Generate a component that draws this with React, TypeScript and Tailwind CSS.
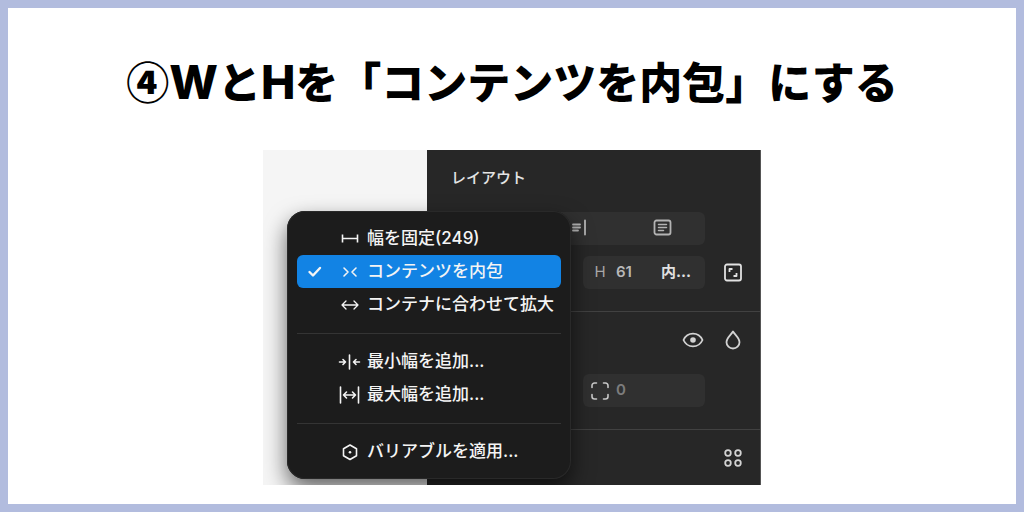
import { useState } from 'react'
import type { ReactNode } from 'react'

const iconProps = {
  fill: 'none',
  stroke: 'currentColor',
  strokeWidth: 1.6,
  strokeLinecap: 'round' as const,
  strokeLinejoin: 'round' as const,
  'aria-hidden': true,
}

const MenuIcon = ({ children }: { children: ReactNode }) => (
  <svg {...iconProps} viewBox="0 0 24 24" className="ml-[15px] mr-[5px] h-6 w-6 shrink-0">
    {children}
  </svg>
)

const PanelIcon = ({ children }: { children: ReactNode }) => (
  <svg {...iconProps} viewBox="0 0 24 24" strokeWidth={1.8} className="h-6 w-6">
    {children}
  </svg>
)

const menuGroups = [
  [
    {
      id: 'fixed',
      label: '幅を固定(249)',
      icon: <path d="M4.500 7.500v8M19.500 7.500v8M4.500 11.500h15" strokeLinecap="butt" />,
    },
    {
      id: 'hug',
      label: 'コンテンツを内包',
      icon: <path d="M6 8l4 4-4 4M18 8l-4 4 4 4" />,
    },
    {
      id: 'fill',
      label: 'コンテナに合わせて拡大',
      icon: <path d="M4 12h16M8 8l-4 4 4 4M16 8l4 4-4 4" strokeWidth="1.3" />,
    },
  ],
  [
    {
      id: 'min',
      label: '最小幅を追加...',
      icon: <path d="M11.500 5v14M1.500 12H7.500M5 9.500L7.500 12 5 14.500M21.500 12h-6M18 9.500L15.500 12l2.500 2.500" />,
    },
    {
      id: 'max',
      label: '最大幅を追加...',
      icon: <path d="M2.500 4v16M20.500 4v16M5.500 12h12M8.500 9l-3 3 3 3M14.500 9l3 3-3 3" />,
    },
  ],
  [
    {
      id: 'variable',
      label: 'バリアブルを適用...',
      icon: (
        <>
          <path d="M12 5l6.500 3.700v7L12 19.500l-6.500-3.800v-7z" />
          <circle cx="12" cy="12.200" r="1.300" fill="currentColor" stroke="none" />
        </>
      ),
    },
  ],
]

const WidthMenu = () => {
  const [selected, setSelected] = useState('hug')

  return (
    <div
      role="menu"
      className="absolute left-6 top-[61px] w-[284px] rounded-[18px] bg-[#1c1c1c] px-[10px] py-[11px] shadow-[0_10px_22px_rgba(0,0,0,0.6),inset_0_0_0_1px_#292929]"
    >
      {menuGroups.map((group, index) => (
        <div key={index} role="group">
          {index > 0 && <hr className="mb-[11px] mt-3 h-px border-0 bg-[#343434]" />}
          {group.map((item) => (
            <button
              key={item.id}
              type="button"
              role="menuitemradio"
              aria-checked={item.id === selected}
              onClick={() => setSelected(item.id)}
              className={`flex h-[33px] w-full items-center whitespace-nowrap rounded-md pl-[10px] text-left text-[17px] font-medium text-[#f4f4f4] ${
                item.id === selected ? 'bg-[#1283e4]' : ''
              }`}
            >
              <span className="h-4 w-4 shrink-0">
                {item.id === selected && (
                  <svg {...iconProps} viewBox="0 0 16 16" strokeWidth={2.4} className="h-4 w-4">
                    <path d="M2.500 8l3.500 3.500 7-7.500" />
                  </svg>
                )}
              </span>
              <MenuIcon>{item.icon}</MenuIcon>
              {item.label}
            </button>
          ))}
        </div>
      ))}
    </div>
  )
}

const LayoutPanel = () => (
  <aside className="flex-1 border-r border-[#555] bg-[#272727] text-[#d6d6d6]">
    <section className="border-b border-[#414141] pb-[22px] pl-6 pr-[15px] pt-4">
      <h2 className="mb-[22px] h-6 text-[15px] font-medium leading-6 text-[#e4e4e4]">レイアウト</h2>
      <div className="mr-10 flex h-[33px] rounded-md bg-[#303030] text-[#b4b4b4]">
        <span className="flex-1" />
        <button type="button" aria-label="右揃え" className="flex flex-1 items-center justify-center">
          <PanelIcon>
            <path d="M7 7.500h7M7 10.500h7M7 13.500h5M19 3.500v14" />
          </PanelIcon>
        </button>
        <button type="button" aria-label="テキスト" className="flex flex-1 items-center justify-center">
          <PanelIcon>
            <rect x="3.500" y="3.500" width="16" height="14" rx="2" />
            <path d="M7.500 7.500h8M7.500 10.500h8M7.500 13.500h5" strokeWidth="1.500" />
          </PanelIcon>
        </button>
      </div>
      <div className="mt-[11px] flex items-center gap-4">
        <div className="grid flex-1 grid-cols-2 gap-[10px]">
          <div className="col-start-2 flex h-[33px] items-center gap-[7px] rounded-md bg-[#303030] px-2 text-[15px]">
            <label htmlFor="height" className="w-[18px] text-center text-[#a8a8a8]">H</label>
            <input id="height" defaultValue="61" className="w-[38px] bg-transparent font-semibold text-[#b8b8b8] outline-none" />
            <button type="button" className="whitespace-nowrap font-bold text-[#e0e0e0]">内...</button>
          </div>
        </div>
        <button type="button" aria-label="縦横比を固定" className="text-[#e2e2e2]">
          <PanelIcon>
            <rect x="4" y="3.500" width="16" height="16" rx="2" />
            <path d="M8.500 11V8h3M15.500 12v3h-3" strokeLinecap="butt" />
          </PanelIcon>
        </button>
      </div>
    </section>

    <section className="border-b border-[#414141] pb-[22px] pl-6 pr-[15px] pt-4">
      <div className="mb-[22px] flex h-6 justify-end gap-4 text-[#d2d2d2]">
        <button type="button" aria-label="表示">
          <PanelIcon>
            <path d="M2.500 12C4.300 8 7.800 5.600 12 5.600S19.700 8 21.500 12c-1.800 4-5.300 6.400-9.500 6.400S4.300 16 2.500 12z" />
            <circle cx="12" cy="12" r="2.800" fill="currentColor" stroke="none" />
          </PanelIcon>
        </button>
        <button type="button" aria-label="ブレンドモード">
          <PanelIcon>
            <path d="M12 3.500c2 3.400 6.500 6.600 6.500 10.700a6.500 6.300 0 0 1-13 0C5.500 10.100 10 6.900 12 3.500z" />
          </PanelIcon>
        </button>
      </div>
      <div className="mr-10 grid grid-cols-2 gap-[10px]">
        <div className="col-start-2 flex h-[33px] items-center gap-[7px] rounded-md bg-[#303030] px-2 text-[15px]">
          <label htmlFor="radius" aria-label="角の半径">
            <svg {...iconProps} viewBox="0 0 18 18" className="h-[18px] w-[18px] text-[#c8c8c8]">
              <path d="M1 5.500V3.500A2.500 2.500 0 0 1 3.500 1h2M12.500 1h2A2.500 2.500 0 0 1 17 3.500v2M17 12.500v2a2.500 2.500 0 0 1-2.500 2.500h-2M5.500 17h-2A2.500 2.500 0 0 1 1 14.500v-2" />
            </svg>
          </label>
          <input id="radius" defaultValue="0" className="w-full bg-transparent font-semibold text-[#7c7c7c] outline-none" />
        </div>
      </div>
    </section>

    <section className="flex justify-end pb-[15px] pl-6 pr-[15px] pt-4 text-[#d2d2d2]">
      <button type="button" aria-label="スタイル">
        <PanelIcon>
          <circle cx="7" cy="7" r="2.800" />
          <circle cx="17" cy="7" r="2.800" />
          <circle cx="7" cy="17" r="2.800" />
          <circle cx="17" cy="17" r="2.800" />
        </PanelIcon>
      </button>
    </section>
  </aside>
)

const Latin = ({ children }: { children: ReactNode }) => (
  <span className="font-['Inter',sans-serif] text-[46px] font-extrabold leading-none">{children}</span>
)

const App = () => {
  return (
    <main className="flex min-h-screen flex-col items-center border-8 border-[#b2bcde] bg-white pt-10 font-['Inter','Noto_Sans_CJK_JP',sans-serif]">
      <h1 className="whitespace-nowrap font-['Noto_Sans_CJK_JP',sans-serif] text-[43px] font-black leading-[64px] text-black">
        ④<Latin>W</Latin>と<Latin>H</Latin>を「コンテンツを内包」にする
      </h1>

      <div className="relative mt-[38px] flex w-full max-w-[498px] overflow-hidden bg-[#f5f5f5]">
        <div className="w-[164px] shrink-0" />
        <LayoutPanel />
        <WidthMenu />
      </div>
    </main>
  )
}

export default App
